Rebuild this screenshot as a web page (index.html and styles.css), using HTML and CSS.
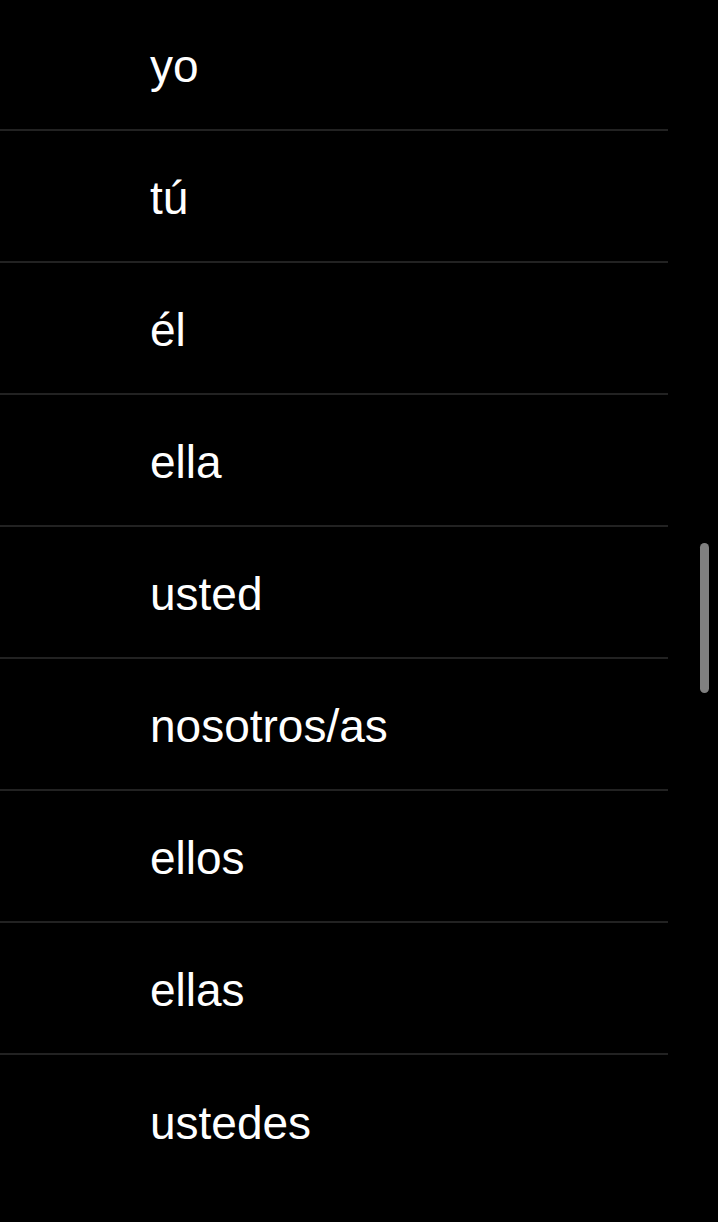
FILE: index.html
```html
<!DOCTYPE html>
<html lang="es">
<head>
<meta charset="utf-8">
<link rel="stylesheet" href="styles.css">
</head>
<body>
<ul class="list">
  <li class="row">yo</li>
  <li class="row">tú</li>
  <li class="row">él</li>
  <li class="row">ella</li>
  <li class="row">usted</li>
  <li class="row">nosotros/as</li>
  <li class="row">ellos</li>
  <li class="row">ellas</li>
  <li class="row">ustedes</li>
</ul>
<div class="scrollbar"></div>
</body>
</html>
```
FILE: styles.css
```css
html, body {
  margin: 0;
  padding: 0;
  background: #000;
  height: 100%;
  overflow: hidden;
}
.list {
  list-style: none;
  margin: -1px 0 0 0;
  padding: 0;
  width: 668px;
}
.row {
  box-sizing: border-box;
  height: 132px;
  display: flex;
  align-items: center;
  padding-left: 150px;
  padding-top: 3px;
  border-bottom: 2px solid #222222;
  font-family: "Liberation Sans", Arial, sans-serif;
  font-size: 46px;
  color: #ffffff;
}
.row:last-child {
  border-bottom: none;
}
.scrollbar {
  position: absolute;
  left: 700px;
  top: 543px;
  width: 9px;
  height: 150px;
  border-radius: 5px;
  background: #808080;
}
```
